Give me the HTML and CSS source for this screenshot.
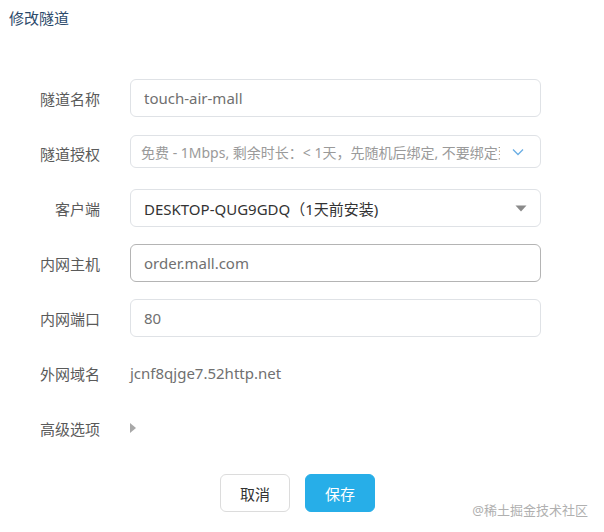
FILE: index.html
```html
<!DOCTYPE html>
<html lang="zh-CN">
<head>
    <meta charset="UTF-8">
    <title>修改隧道</title>
    <link rel="stylesheet" href="styles.css">
</head>
<body>
    <div class="page">
        <h1 class="title">修改隧道</h1>
        <form class="tunnel-form">
            <div class="form-row">
                <label class="label">隧道名称</label>
                <div class="field input">touch-air-mall</div>
            </div>
            <div class="form-row">
                <label class="label">隧道授权</label>
                <div class="field select small">
                    <span class="select-text">免费 - 1Mbps, 剩余时长：&lt; 1天，先随机后绑定, 不要绑定到其他客户端</span>
                    <svg class="chevron" width="12" height="8" viewBox="0 0 12 8"><path d="M1 1.5 L6 6.5 L11 1.5" fill="none" stroke="#6aaee4" stroke-width="1.3"/></svg>
                </div>
            </div>
            <div class="form-row">
                <label class="label">客户端</label>
                <div class="field select dark">
                    <span class="select-text">DESKTOP-QUG9GDQ（1天前安装)</span>
                    <svg class="caret" width="12" height="7" viewBox="0 0 12 7"><path d="M0.5 0.5 L11.5 0.5 L6 6.5 Z" fill="#8a8a8a"/></svg>
                </div>
            </div>
            <div class="form-row">
                <label class="label">内网主机</label>
                <div class="field input hover">order.mall.com</div>
            </div>
            <div class="form-row">
                <label class="label">内网端口</label>
                <div class="field input">80</div>
            </div>
            <div class="form-row">
                <label class="label">外网域名</label>
                <div class="plain">jcnf8qjge7.52http.net</div>
            </div>
            <div class="form-row">
                <label class="label">高级选项</label>
                <svg class="expand" width="6" height="10" viewBox="0 0 6 10"><path d="M0 0 L6 5 L0 10 Z" fill="#a8a8a8"/></svg>
            </div>
            <div class="actions">
                <button type="button" class="btn">取消</button>
                <button type="button" class="btn primary">保存</button>
            </div>
        </form>
        <div class="watermark">@稀土掘金技术社区</div>
    </div>
</body>
</html>
```

FILE: styles.css
```css
body {
    margin: 0;
    background: #fff;
    font-family: "Noto Sans", "Noto Sans CJK SC", sans-serif;
    color: #555;
}

.page {
    position: relative;
    width: 604px;
    height: 532px;
    overflow: hidden;
}

.title {
    margin: 0;
    padding: 8px 0 0 9px;
    font-size: 15px;
    font-weight: normal;
    line-height: 20px;
    color: #2c4a6b;
}

.tunnel-form {
    margin-top: 51px;
}

.form-row {
    display: grid;
    grid-template-columns: 100px 411px;
    column-gap: 30px;
    align-items: center;
    height: 38px;
    margin-bottom: 17px;
}

.label {
    text-align: right;
    font-size: 15px;
    color: #5a5a5a;
}

.field {
    box-sizing: border-box;
    height: 38px;
    border: 1px solid #dfe2e6;
    border-radius: 6px;
    padding: 0 13px;
    display: flex;
    align-items: center;
    font-size: 15px;
    color: #707070;
}

.field.hover {
    border-color: #b4b4b4;
}

.select {
    justify-content: space-between;
    gap: 12px;
}

.select.small {
    height: 33px;
    margin-top: -3px;
    font-size: 14px;
    color: #9a9a9a;
    padding: 0 16px 0 10px;
}

.select.dark {
    color: #333;
}

.select-text {
    white-space: nowrap;
    overflow: hidden;
    flex: 1;
}

.chevron,
.caret {
    flex: none;
}

.plain {
    font-size: 15px;
    color: #707070;
}

.actions {
    display: flex;
    gap: 15px;
    padding-left: 220px;
    margin-top: 27px;
}

.btn {
    width: 70px;
    height: 38px;
    border: 1px solid #dcdcdc;
    border-radius: 6px;
    background: #fff;
    font-family: "Noto Sans", "Noto Sans CJK SC", sans-serif;
    font-size: 15px;
    color: #333;
    cursor: pointer;
}

.btn.primary {
    border-color: #27aee8;
    background: #27aee8;
    color: #fff;
}

.watermark {
    position: absolute;
    right: 16px;
    bottom: 13px;
    font-size: 13px;
    color: #b0b0b0;
}
```
